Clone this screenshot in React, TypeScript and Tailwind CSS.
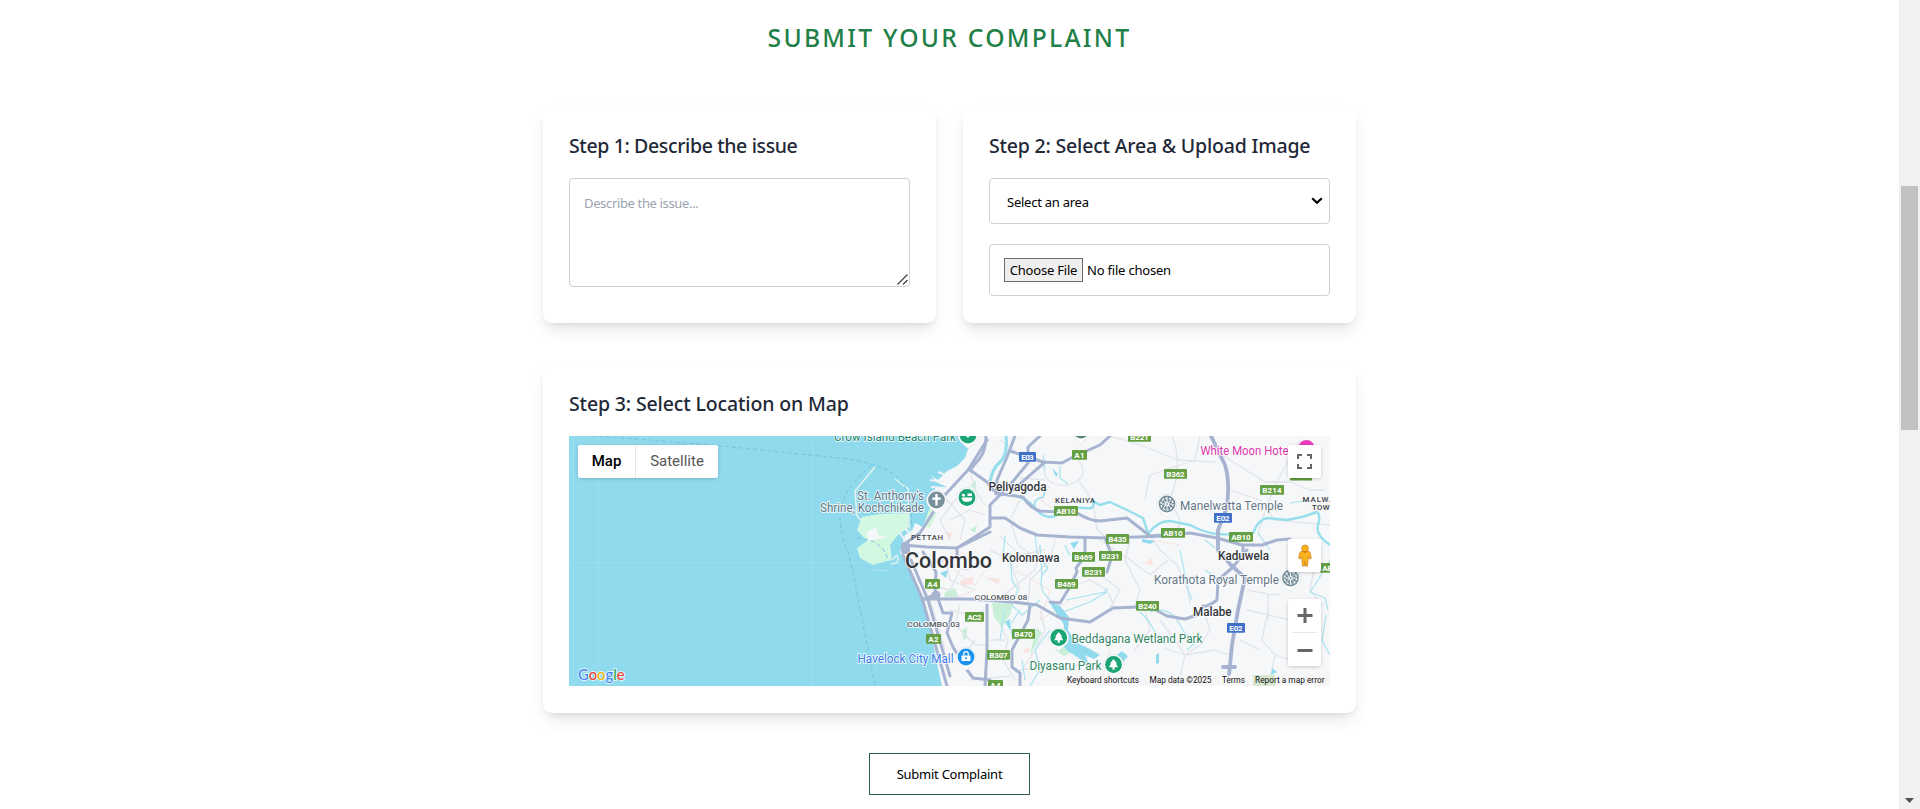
import React from "react";

const ROADS = [
  "M987 440L968 470L943 497L920 533L903 545L927 547L957 548L990 532",
  "M970 470L987 482Q993 492 1000 494L1023 497Q1030 508 1040 511L1077 513Q1090 521 1100 521L1127 518L1150 536L1190 533L1217 538L1242 545L1262 545L1277 540L1290 539",
  "M986 436Q986 450 980 458L970 470",
  "M1015 436L1007 457L997 480L996 494",
  "M1040 436L1028 447V463L1010 485L990 505V527L970 540L957 548V556",
  "M1010 451L1043 462L1062 463L1073 457L1100 445L1110 436",
  "M1045 462L1013 490",
  "M990 518H1005L1020 528L1037 535L1070 537L1107 538L1165 536",
  "M1085 538V553",
  "M1105 538L1112 556L1107 572",
  "M1082 560L1076 568L1077 572L1068 590L1060 603L1050 602",
  "M1247 550L1232 568L1218 580L1217 600Q1208 607 1203 606L1197 615L1185 619L1167 616L1150 607L1137 607L1113 608L1090 622L1060 618L1037 605L1013 602L970 599H923",
  "M1030 605L1028 620L1012 650V667L1020 673V686",
  "M987 605V650L985 686",
  "M903 555L922 598L947 686",
  "M911 560L928 600L950 676",
  "M922 600L935 595L936 572L923 552",
  "M936 593L943 613H952L947 633L953 647L967 670L973 678L990 680",
  "M1243 545V558",
];

const MINOR = [
  "M1043 462Q1043 480 1055 484T1078 480T1076 457M1078 480L1093 502L1097 530L1107 538",
  "M1110 436L1140 445L1178 460L1215 462",
  "M1172 436Q1180 455 1176 480L1170 500L1180 520L1177 535",
  "M1214 436V450L1238 465L1265 482H1290L1310 490H1325",
  "M1300 440L1275 485L1262 520L1258 535",
  "M1230 490L1260 500L1275 520L1330 525",
  "M1150 536L1160 550L1177 565L1188 590L1190 605",
  "M1045 480L1020 478M1020 500L1010 520L1018 545L1040 560",
  "M1000 440L1020 455M1055 540L1050 560L1030 580L1028 605",
  "M1040 545L1035 570L1010 590L1000 600",
  "M1100 540L1130 560L1150 575L1168 560",
  "M1110 608L1120 590L1100 575M1060 590L1090 580L1107 590L1115 608",
  "M1160 620L1175 640L1185 655L1215 650L1230 655M1185 655L1178 686",
  "M1203 607L1210 630L1200 645L1185 655L1165 648",
  "M1268 620V595L1280 594M1268 610L1262 640L1275 655L1290 660M1275 655L1270 680",
  "M1310 545L1315 565L1310 590L1322 605",
  "M1040 610L1045 630L1035 650L1022 670M1020 670L1050 665L1070 670L1090 655",
  "M1000 625L1008 640L1003 660L1015 680M990 640L1005 640",
  "M925 565L945 560L965 570L985 565M945 556L950 580L975 590",
  "M930 585L950 590L960 570M960 605L955 625L975 645L985 645",
  "M950 610L970 615L985 610M960 660L975 640M950 520L970 510L985 515",
  "M940 520L955 500L975 490L985 505M947 500L965 520L960 540",
  "M970 470L975 490M950 540L940 520M925 555L935 565",
  "M990 550L1010 560L1020 590M1000 536L1020 555L1045 550",
  "M1130 540L1125 560L1140 590L1135 606M1145 610L1150 630L1135 650",
  "M1247 610L1290 620M1240 640L1260 650M1247 590L1268 594",
  "M970 680L1010 676M930 600L945 650M1200 436L1195 460L1150 475L1145 500",
];

const CREEKS = [
  "M1040 545L1042 575Q1038 590 1050 600",
  "M1010 552L1012 580L1018 590L1012 605L1022 615L1040 600",
  "M1005 610L1000 640M1042 575L1048 568L1037 556",
  "M1066 600L1105 592L1107 588M1063 612L1090 602L1107 592",
  "M1065 545L1070 556M1150 612Q1170 605 1180 625T1200 632",
  "M1180 550L1188 590L1192 600M1205 540L1215 548",
  "M1187 650L1200 638M1310 500L1290 503M1258 533L1270 550",
  "M1330 560L1315 585L1310 592L1325 598L1328 610",
  "M1326 615L1322 640L1330 655M1050 630L1035 650L1040 670L1030 686",
  "M1140 612L1148 620L1160 640M1060 466V478L1068 484M1043 455L1045 470",
  "M1020 610L1010 625L1013 640M1005 536L1003 555M1035 535L1038 560",
  "M1022 660L1025 680M1205 570L1217 578",
];

type ShieldProps = { x: number; y: number; w: number; t: string; blue?: boolean };
const SHIELDS: ShieldProps[] = [
  { x: 1128, y: 432, w: 23, t: "B221" },
  { x: 1019, y: 452, w: 17, t: "E03", blue: true },
  { x: 1072, y: 450, w: 15, t: "A1" },
  { x: 1054, y: 506, w: 24, t: "AB10" },
  { x: 1106, y: 534, w: 23, t: "B435" },
  { x: 1072, y: 552, w: 23, t: "B469" },
  { x: 1099, y: 551, w: 23, t: "B231" },
  { x: 1082, y: 567, w: 23, t: "B231" },
  { x: 1055, y: 579, w: 23, t: "B469" },
  { x: 1136, y: 601, w: 23, t: "B240" },
  { x: 1012, y: 629, w: 23, t: "B470" },
  { x: 987, y: 650, w: 23, t: "B307" },
  { x: 1164, y: 469, w: 23, t: "B362" },
  { x: 1260, y: 485, w: 24, t: "B214" },
  { x: 1161, y: 528, w: 24, t: "AB10" },
  { x: 1229, y: 532, w: 24, t: "AB10" },
  { x: 1214, y: 513, w: 18, t: "E02", blue: true },
  { x: 1227, y: 623, w: 18, t: "E02", blue: true },
  { x: 925, y: 579, w: 15, t: "A4" },
  { x: 926, y: 634, w: 15, t: "A2" },
  { x: 965, y: 612, w: 19, t: "AC2" },
  { x: 988, y: 680, w: 15, t: "A4" },
  { x: 1320, y: 563, w: 24, t: "AB10" },
];

function Shield({ x, y, w, t, blue }: ShieldProps) {
  return (
    <g>
      <rect x={x} y={y} width={w} height={9.8} rx={0.8} fill={blue ? "#3f70c9" : "#64a043"} />
      <text x={x + w / 2} y={y + 7.8} fontSize={8} fontWeight={700} fill="#fff" textAnchor="middle" textLength={w - 4.6}>{t}</text>
    </g>
  );
}

type LabelProps = { x: number; y: number; w: number; s: number; c?: string; b?: number; children: string };
function Label({ x, y, w, s, c = "#33363a", b = 400, children }: LabelProps) {
  return (
    <text x={x} y={y} fontSize={s} fontWeight={b} fill={c} stroke="#fff" strokeOpacity={0.85} strokeWidth={1.8} strokeLinejoin="round" paintOrder="stroke" textLength={w} lengthAdjust="spacingAndGlyphs">
      {children}
    </text>
  );
}

function Pin({ x, y, c, children }: { x: number; y: number; c: string; children?: React.ReactNode }) {
  return (
    <g transform={`translate(${x} ${y})`}>
      <path d="M0 13.5L-6 8.2A10 10 0 1 1 6 8.2Z" fill="#fff" stroke="#cfd6dc" strokeWidth={0.5} />
      <circle r={8.4} fill={c} />
      {children}
    </g>
  );
}

const Tree = () => <path d="M0-5.500L3.600-1H2.400L4.500 2.700H1V5.200H-1V2.700H-4.500L-2.400-1H-3.600Z" fill="#fff" />;
const Wheel = () => (
  <g fill="none" stroke="#fff" strokeWidth={1}>
    <circle r={6} strokeDasharray="2.400 1.300" strokeWidth={1.3} />
    <path d="M0-5V5M-5 0H5M-3.500-3.500L3.500 3.500M-3.500 3.500L3.500-3.500" />
    <circle r={1.5} fill="#78909c" />
  </g>
);

function MapCanvas() {
  return (
    <svg className="block h-full w-full" viewBox="569 436 761 250" fontFamily="Roboto, sans-serif">
      <rect x="569" y="436" width="761" height="250" fill="#90daee" />
      <g stroke="#9adef0" strokeWidth="1">
        <path d="M573 436V686M598.500 436V686M812.500 436V686M569 562.500H900" />
      </g>
      <path d="M974 436L970 443L965 458L957 466L947 471L938 480L930 475L938 483L947 487L936 488L932 493L940 497L935 507L923 527L915 523L912 531L905 535L902 545L900 552L910 570L922 600L932 637L937 663L942 686H1330V436Z" fill="#f6f7f8" />
      <path d="M932 502L923 526L930 528L943 500Z" fill="#d7f5df" />
      <path d="M862 517L880 514L908 513L909 527L897 536L890 545L892 560L883 562L873 565L860 558L857 548L867 541L857 530Z" fill="#d3f8e2" />
      <path d="M867 532L876 527L878 535L888 537L868 541Z" fill="#f6f7f9" />
      <path d="M875 467L855 491L857 516L862 521M895 479L908 489L909 525L912 533M893 560Q897 552 898 558T891 564" fill="none" stroke="#dff3ef" strokeWidth="1.500" />
      <path d="M873 570L888 571" stroke="#b5e5f0" />
      <path d="M930 480L944 482M931 487L945 488M938 472L946 475M905 528L915 540M900 533L908 545" stroke="#eef2f7" strokeWidth="2" />
      <g fill="none" stroke="#78c2db" strokeWidth="1" strokeDasharray="4 3">
        <path d="M592 436Q700 443 800 454L840 458Q880 462 900 479Q914 500 911 530" />
        <path d="M872 465Q841 490 840 515Q840 535 848 552L853 572L875 686M857 538Q885 540 888 562" />
      </g>
      <g fill="#c9efd8">
        <path d="M992 603L1014 601L1010 615L1002 627L994 617Z" />
        <path d="M945 592L955 588L958 597L944 597ZM962 630L967 628V638L963 640ZM970 530L977 525L975 533ZM1055 650L1067 645L1072 652L1064 656ZM970 486L976 480V490Z" />
        <path d="M1036 628L1042 632L1036 645L1030 655Z" />
      </g>
      <path d="M960 581L974 576L972 584L962 587ZM946 531L953 533L950 540ZM1144 563L1152 558L1153 566ZM985 577L1000 579L998 584ZM1022 650L1030 648L1028 654Z" fill="#fbe4df" />
      <g fill="none" stroke="#e1e4eb" strokeWidth="1.300" strokeLinejoin="round">
        {MINOR.map((d) => <path key={d} d={d} />)}
      </g>
      <g fill="none" stroke="#f5dedf" strokeWidth="0.900">
        <path d="M940 560L975 585L985 570M955 550L985 565M950 600L975 590M1020 455L1040 470M1015 570L1050 590L1040 620L1070 600M1095 635L1110 650L1105 670M1150 540L1180 545M1040 500L1052 508M1050 485L1042 500" />
      </g>
      <g fill="none" stroke="#a8e4ef" strokeWidth="1.200" strokeLinejoin="round">
        {CREEKS.map((d) => <path key={d} d={d} />)}
      </g>
      <g fill="none" stroke="#98dfed" strokeWidth="2.400" strokeLinejoin="round">
        <path d="M1006 436Q1008 455 1000 462T990 482" strokeWidth="3.200" />
        <path d="M1000 494Q1024 494 1035 508T1060 514T1085 508T1093 501L1100 505L1110 502L1127 510L1143 518L1148 533" />
        <path d="M1036 509Q1031 500 1043 497L1045 491" strokeWidth="1.600" />
        <path d="M1148 534Q1157 521 1170 521L1190 525Q1205 533 1217 534T1253 533Q1258 520 1267 518L1287 520L1302 517L1317 512Q1321 515 1318 525T1330 545" />
      </g>
      <path d="M1049 602L1060 606L1069 617L1068 630L1075 642L1088 648L1100 655L1094 659L1085 655L1089 665L1080 659L1068 651L1062 645L1064 625Z" fill="#90daee" />
      <path d="M1070 543L1079 541L1074 549ZM1142 539L1155 541L1150 544L1142 542ZM1052 468L1058 474L1056 477ZM1117 655L1122 651L1128 656L1123 662L1118 660ZM1156 655L1159 653V663L1156 664ZM1272 668L1277 672L1271 675ZM940 573L948 570L946 578ZM1005 622L1010 619V630Z" fill="#90daee" />
      <g fill="none" stroke="#a7b4d1" strokeWidth="3" strokeLinejoin="round" strokeLinecap="round">
        {ROADS.map((d) => <path key={d} d={d} />)}
        <path d="M1210 434L1225 465Q1230 480 1227 507L1218 530V550L1230 564L1245 578L1238 610L1232 645L1229 675M1223 667H1235" strokeWidth="3.800" />
      </g>
      <circle cx="936" cy="595" r="4.500" fill="#a7b4d1" />
      <rect x="901" y="542" width="9" height="12" rx="3" fill="#a7b4d1" />

      <rect x="1290" y="471" width="22" height="9.500" fill="#64a043" />
      {SHIELDS.map((s) => <Shield key={`${s.x}-${s.y}`} {...s} />)}

      <Pin x={968} y={435} c="#1aa573"><path d="M-3 0L0 3L4-2L0-1Z" fill="#fff" /></Pin>
      <Pin x={936.5} y={500} c="#78909c"><path d="M-1.200-6H1.200V-2.500H4.200V-.3H1.200V5.500H-1.200V-.3H-4.200V-2.500H-1.200Z" fill="#fff" /></Pin>
      <Pin x={967} y={497.5} c="#1aa573">
        <path d="M-5.500 0H5.500Q5 4.200 1 4.200H-2Q-5 3.500-5.500 0ZM-5.500-2.500Q-4-4.500-2-3V-1H-4ZM.5-1.500V-4H5V-1.500Z" fill="#fff" />
      </Pin>
      <Pin x={1081} y={430} c="#5c8270" />
      <Pin x={1058.7} y={637.5} c="#1aa573"><Tree /></Pin>
      <Pin x={1113.5} y={664.5} c="#1aa573"><Tree /></Pin>
      <Pin x={966} y={657} c="#1a92f0">
        <path d="M-4.500-1.500H4.500V4H-4.500Z" fill="#fff" />
        <path d="M-2.300-1.500V-3A2.300 2.300 0 0 1 2.300-3V-1.500" fill="none" stroke="#fff" strokeWidth="1.200" />
        <circle cy="1.200" r="1" fill="#1a92f0" />
      </Pin>
      <Pin x={1167} y={504} c="#78909c"><Wheel /></Pin>
      <Pin x={1290.5} y={578} c="#78909c"><Wheel /></Pin>
      <circle cx="1306.500" cy="448" r="8" fill="#ec3bbb" />

      <Label x={834} y={440.5} w={122} s={12} c="#21846c">Crow Island Beach Park</Label>
      <Label x={857} y={499.5} w={67} s={12} c="#637687">St. Anthony&#39;s</Label>
      <Label x={820} y={511.5} w={104} s={12} c="#637687">Shrine, Kochchikade</Label>
      <text x="911" y="539.500" fontSize="7.800" fontWeight="500" fill="#3e4248" textLength="32">PETTAH</text>
      <Label x={905} y={568} w={87} s={22.5} b={500}>Colombo</Label>
      <Label x={988.5} y={491} w={58} s={12} b={500}>Peliyagoda</Label>
      <text x="1055" y="503" fontSize="7.800" fontWeight="500" fill="#3e4248" textLength="40">KELANIYA</text>
      <Label x={1002} y={561.5} w={57.5} s={12} b={500}>Kolonnawa</Label>
      <Label x={1218} y={560} w={51} s={12} b={500}>Kaduwela</Label>
      <Label x={1193} y={616} w={38.5} s={12} b={500}>Malabe</Label>
      <Label x={974.5} y={600.3} w={53} s={7.8} b={500} c="#555a61">COLOMBO 08</Label>
      <Label x={907} y={627.3} w={53} s={7.8} b={500} c="#555a61">COLOMBO 03</Label>
      <Label x={857.5} y={662.5} w={96} s={12} c="#3d7bea">Havelock City Mall</Label>
      <Label x={1071.5} y={643} w={131} s={12} c="#318664">Beddagana Wetland Park</Label>
      <Label x={1029.5} y={670} w={72} s={12} c="#318664">Diyasaru Park</Label>
      <Label x={1200.5} y={454.5} w={88} s={12} c="#dc38ae">White Moon Hote</Label>
      <Label x={1180} y={510} w={103} s={12} c="#637687">Manelwatta Temple</Label>
      <Label x={1154} y={583.5} w={125} s={12} c="#637687">Korathota Royal Temple</Label>
      <text x="1302.500" y="501.500" fontSize="7.800" fontWeight="500" fill="#3e4248" textLength="32">MALWA</text>
      <text x="1312" y="509.500" fontSize="7.800" fontWeight="500" fill="#3e4248" textLength="17.500">TOW</text>

      <g fontSize="8.800" fill="#111">
        <rect x="1064" y="675" width="266" height="11" fill="#f5f5f5" opacity=".5" />
        <rect x="1253" y="675" width="22" height="11" fill="#cfe3c5" opacity=".8" />
        <text x="1067" y="683" textLength="72" lengthAdjust="spacingAndGlyphs">Keyboard shortcuts</text>
        <text x="1149.500" y="683" textLength="62" lengthAdjust="spacingAndGlyphs">Map data ©2025</text>
        <text x="1222" y="683" textLength="23" lengthAdjust="spacingAndGlyphs">Terms</text>
        <text x="1255" y="683" textLength="69.500" lengthAdjust="spacingAndGlyphs">Report a map error</text>
      </g>
      <text x="578" y="679.500" fontFamily="Lato, sans-serif" fontSize="15.500" fontWeight="500" stroke="#fff" strokeOpacity=".8" strokeWidth="1.800" strokeLinejoin="round" paintOrder="stroke" textLength="46.500" lengthAdjust="spacingAndGlyphs">
        <tspan fill="#4285f4">G</tspan><tspan fill="#ea4335">o</tspan><tspan fill="#eeb40c">o</tspan><tspan fill="#4285f4">g</tspan><tspan fill="#34a853">l</tspan><tspan fill="#ea4335">e</tspan>
      </text>
    </svg>
  );
}

const CARD = "bg-white rounded-[9px] px-[26px] pb-[26px] shadow-[0_9px_17px_-3px_rgba(0,0,0,0.1),0_4px_7px_-3px_rgba(0,0,0,0.09)]";
const HEADING = "h-[30px] text-[19.5px] leading-[29px] font-medium text-[#1f2937] whitespace-nowrap";
const CONTROL = "absolute bg-white rounded-[2px] shadow-[0_1px_4px_-1px_rgba(0,0,0,0.3)]";

export default function App() {
  return (
    <div className="flex h-[809px] w-[1920px] overflow-hidden bg-white font-['Noto_Sans',sans-serif] text-[13px] text-black">
      <main className="flex flex-1 flex-col items-center">
        <h1 className="mt-[20px] h-[36px] text-[24.7px] leading-[36px] font-medium tracking-[2.25px] text-[#1f8048]">SUBMIT YOUR COMPLAINT</h1>

        <div className="mt-[50px] grid w-[813px] grid-cols-2 gap-[27px]">
          <section className={`${CARD} h-[217px] pt-[25px]`}>
            <h2 className={`${HEADING} tracking-[-0.37px]`}>Step 1: Describe the issue</h2>
            <div className="relative mt-[17px] h-[109px]">
              <textarea
                className="block h-full w-full resize-none rounded-[4px] border border-[#cdd0d4] px-[14px] py-[13px] leading-[22px] tracking-[-0.35px] placeholder:text-[#9ca3af]"
                placeholder="Describe the issue..."
              />
              <svg className="absolute right-[2px] bottom-[2px]" width="11" height="11" viewBox="0 0 11 11" stroke="#444" strokeWidth="1.300">
                <path d="M.5 10.500L10.500 .5M6 10.500L10.500 6" />
              </svg>
            </div>
          </section>
          <section className={`${CARD} h-[217px] pt-[25px]`}>
            <h2 className={`${HEADING} tracking-[-0.19px]`}>Step 2: Select Area &amp; Upload Image</h2>
            <div className="mt-[17px] flex h-[46px] items-center justify-between rounded-[4px] border border-[#cdd0d4] pr-[6px] pl-[17px]">
              <span className="mt-[3px] tracking-[-0.25px]">Select an area</span>
              <svg width="12" height="8" viewBox="0 0 12 8" fill="none" stroke="#000" strokeWidth="2.200">
                <path d="M1.200 1.300L6 5.800L10.800 1.300" />
              </svg>
            </div>
            <div className="mt-[20px] flex h-[52px] items-center rounded-[4px] border border-[#cdd0d4] pl-[14px]">
              <button className="h-[24px] w-[79px] border border-[#6b6b6b] bg-[#efefef] leading-[22px] tracking-[-0.2px] whitespace-nowrap">Choose File</button>
              <span className="mt-px ml-[4px] tracking-[-0.2px]">No file chosen</span>
            </div>
          </section>
        </div>

        <section className={`${CARD} mt-[42px] h-[348px] w-[813px] pt-[24px]`}>
          <h2 className={`${HEADING} tracking-[-0.14px]`}>Step 3: Select Location on Map</h2>
          <div className="relative mt-[17px] h-[250px] w-[761px] overflow-hidden font-[Roboto,sans-serif]">
            <MapCanvas />
            <div className={`${CONTROL} top-[9px] left-[9px] flex h-[33px] w-[140px] items-center text-[15px]`}>
              <span className="flex h-full w-[58px] items-center justify-center border-r border-[#e6e6e6] font-medium">Map</span>
              <span className="flex-1 text-center text-[#565656]">Satellite</span>
            </div>
            <div className={`${CONTROL} top-[9px] right-[9px] flex h-[33px] w-[33px] items-center justify-center`}>
              <svg width="15" height="15" viewBox="0 0 15 15" fill="none" stroke="#666" strokeWidth="2">
                <path d="M1 5V1H5M10 1H14V5M14 10V14H10M5 14H1V10" />
              </svg>
            </div>
            <div className={`${CONTROL} top-[103px] right-[9px] flex h-[33px] w-[33px] items-center justify-center`}>
              <svg width="14" height="26" viewBox="0 0 16 27">
                <path d="M4.500 8H11.500Q13.500 8 14 10L15.200 16L13.500 17L11.800 14L11 25H8.600L8 19L7.400 25H5L4.200 14L2.500 17L.8 16L2 10Q2.500 8 4.500 8Z" fill="#fbb31c" stroke="#c97c12" strokeWidth=".8" />
                <circle cx="8" cy="4.800" r="3.800" fill="#fbb31c" stroke="#c97c12" strokeWidth=".8" />
                <path d="M5 8.300Q8 11.500 11 8.300Z" fill="#c97c12" />
              </svg>
            </div>
            <div className={`${CONTROL} top-[163px] right-[9px] flex h-[67px] w-[33px] flex-col items-center`}>
              <svg width="33" height="67" viewBox="0 0 33 67" fill="none" stroke="#666" strokeWidth="3">
                <path d="M9.500 16.500H24.500M17 9V24M9.500 51.500H24.500" />
                <path d="M4 33.500H29" stroke="#e6e6e6" strokeWidth="1" />
              </svg>
            </div>
          </div>
        </section>

        <button className="mt-[40px] h-[42px] w-[161px] border border-[#2c5f4b] bg-white pt-px tracking-[-0.25px]">Submit Complaint</button>
      </main>

      <div className="flex w-[21px] flex-col items-center bg-[#f1f1f1]">
        <div className="mt-[186px] h-[244px] w-[17px] bg-[#c1c1c1]" />
        <svg className="mt-auto mb-[6px]" width="9" height="5" viewBox="0 0 9 5">
          <path d="M0 0H9L4.500 5Z" fill="#505050" />
        </svg>
      </div>
    </div>
  );
}
